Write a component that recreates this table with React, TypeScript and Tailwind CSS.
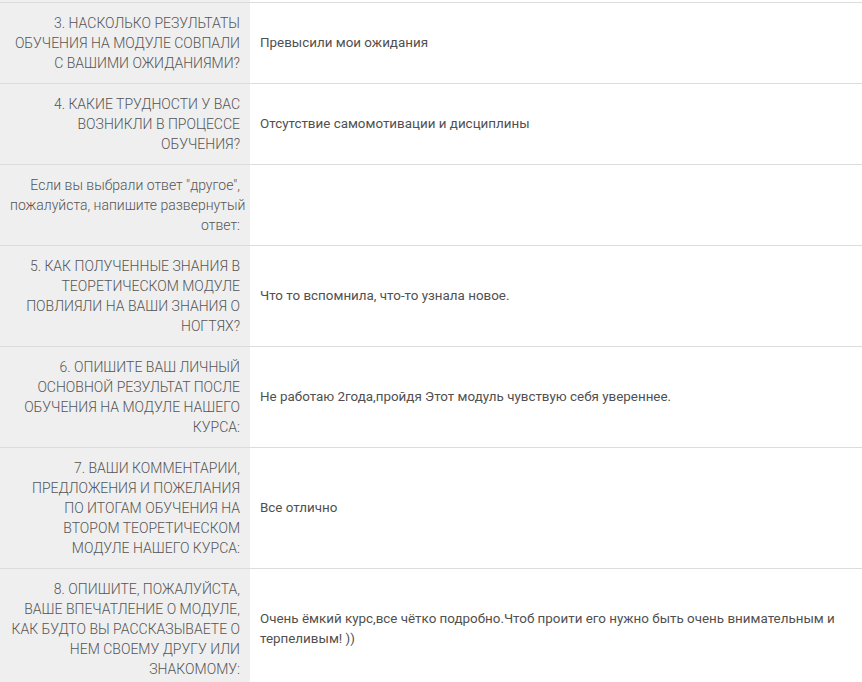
const ROWS: { q: string[]; a: string[] }[] = [
  {
    q: ['3. НАСКОЛЬКО РЕЗУЛЬТАТЫ', 'ОБУЧЕНИЯ НА МОДУЛЕ СОВПАЛИ', 'С ВАШИМИ ОЖИДАНИЯМИ?'],
    a: ['Превысили мои ожидания'],
  },
  {
    q: ['4. КАКИЕ ТРУДНОСТИ У ВАС', 'ВОЗНИКЛИ В ПРОЦЕССЕ', 'ОБУЧЕНИЯ?'],
    a: ['Отсутствие самомотивации и дисциплины'],
  },
  {
    q: ['Если вы выбрали ответ "другое",', 'пожалуйста, напишите развернутый', 'ответ:'],
    a: [],
  },
  {
    q: ['5. КАК ПОЛУЧЕННЫЕ ЗНАНИЯ В', 'ТЕОРЕТИЧЕСКОМ МОДУЛЕ', 'ПОВЛИЯЛИ НА ВАШИ ЗНАНИЯ О', 'НОГТЯХ?'],
    a: ['Что то вспомнила, что-то узнала новое.'],
  },
  {
    q: ['6. ОПИШИТЕ ВАШ ЛИЧНЫЙ', 'ОСНОВНОЙ РЕЗУЛЬТАТ ПОСЛЕ', 'ОБУЧЕНИЯ НА МОДУЛЕ НАШЕГО', 'КУРСА:'],
    a: ['Не работаю 2года,пройдя Этот модуль чувствую себя увереннее.'],
  },
  {
    q: [
      '7. ВАШИ КОММЕНТАРИИ,',
      'ПРЕДЛОЖЕНИЯ И ПОЖЕЛАНИЯ',
      'ПО ИТОГАМ ОБУЧЕНИЯ НА',
      'ВТОРОМ ТЕОРЕТИЧЕСКОМ',
      'МОДУЛЕ НАШЕГО КУРСА:',
    ],
    a: ['Все отлично'],
  },
  {
    q: [
      '8. ОПИШИТЕ, ПОЖАЛУЙСТА,',
      'ВАШЕ ВПЕЧАТЛЕНИЕ О МОДУЛЕ,',
      'КАК БУДТО ВЫ РАССКАЗЫВАЕТЕ О',
      'НЕМ СВОЕМУ ДРУГУ ИЛИ',
      'ЗНАКОМОМУ:',
    ],
    a: [
      'Очень ёмкий курс,все чётко подробно.Чтоб проити его нужно быть очень внимательным и',
      'терпеливым! ))',
    ],
  },
];

const App = () => {
  return (
    <div className="min-h-screen bg-white font-['Roboto',sans-serif] leading-[20px] text-[#555]">
      {/* tail of the previous row */}
      <div className="flex h-[2px]">
        <div className="w-[250px] shrink-0 bg-[#efefef]" />
        <div className="flex-1" />
      </div>
      {ROWS.map((row, i) => (
        <div key={i} className="flex border-t border-[#dcdcdc]">
          <div className="w-[250px] shrink-0 bg-[#efefef] px-[10px] py-[10px] text-right text-[14px] font-light whitespace-nowrap">
            {row.q.map((line, j) => (
              <div key={j}>{line}</div>
            ))}
          </div>
          <div className="flex flex-1 flex-col justify-center px-[10px] py-[10px] text-[13.4px] whitespace-nowrap text-[#505050]">
            {row.a.map((line, j) => (
              <div key={j}>{line}</div>
            ))}
          </div>
        </div>
      ))}
    </div>
  );
};

export default App;
